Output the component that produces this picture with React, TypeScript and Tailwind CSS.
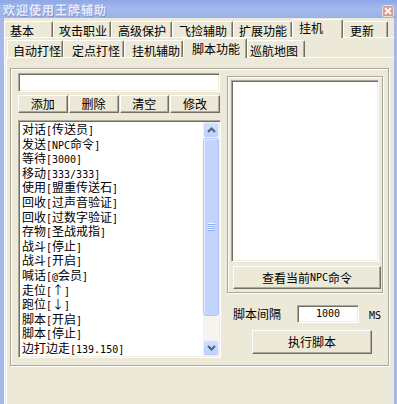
import React from 'react';

type TabDef = { label: string; cls: string; active?: boolean };

const topTabs: TabDef[] = [
  { label: '基本', cls: 'w-[49px] pl-[5px]' },
  { label: '攻击职业', cls: 'w-[58px] pl-[5px]' },
  { label: '高级保护', cls: 'w-[61px] pl-[6px]' },
  { label: '飞捡辅助', cls: 'w-[61px] pl-[6px]' },
  { label: '扩展功能', cls: 'w-[59px] pl-[5px]' },
  { label: '挂机', cls: 'w-[51px] pl-[6px]', active: true },
  { label: '更新', cls: 'w-[45px] pl-[6px]' },
];

const subTabs: TabDef[] = [
  { label: '自动打怪', cls: 'w-[56px] pl-[5px]' },
  { label: '定点打怪', cls: 'w-[61px] pl-[8px]' },
  { label: '挂机辅助', cls: 'w-[59px] pl-[7px]' },
  { label: '脚本功能', cls: 'w-[64px] pl-[8px]', active: true },
  { label: '巡航地图', cls: 'w-[58px] pl-[2px]' },
];

const commands = [
  '对话[传送员]',
  '发送[NPC命令]',
  '等待[3000]',
  '移动[333/333]',
  '使用[盟重传送石]',
  '回收[过声音验证]',
  '回收[过数字验证]',
  '存物[圣战戒指]',
  '战斗[停止]',
  '战斗[开启]',
  '喊话[@会员]',
  '走位[↑]',
  '跑位[↓]',
  '脚本[开启]',
  '脚本[停止]',
  '边打边走[139.150]',
];

// half-width ascii runs get a 6px-wide mono face, like the old bitmap font
function Txt({ s }: { s: string }) {
  return (
    <>
      {s.split(/([\x21-\x7e]+)/).map((p, i) =>
        /^[\x21-\x7e]+$/.test(p) ? (
          <span key={i} className="font-['DejaVu_Sans_Mono',monospace] text-[10px] leading-[10px]">
            {p}
          </span>
        ) : (
          p
        ),
      )}
    </>
  );
}

function Tab({ t, row }: { t: TabDef; row: 1 | 2 }) {
  const base =
    'flex items-center shrink-0 bg-[#ece9d8] border-t border-l border-white border-r border-r-[#716f64] shadow-[inset_-1px_0_0_#aca899] rounded-t-[2px]';
  let size = '';
  if (t.active) size = row === 1 ? 'h-[19px] pb-[3px] -mb-[1px]' : 'h-[20px] -mb-[1px]';
  else size = row === 1 ? 'h-[16px] pt-[2px]' : 'h-[17px] pt-[3px]';
  return <div className={`${base} ${size} ${t.cls}`}>{t.label}</div>;
}

function Button({ children, className }: { children: React.ReactNode; className?: string }) {
  return (
    <div
      className={`flex items-center justify-center bg-[#ece9d8] border border-t-white border-l-white border-r-[#716f64] border-b-[#716f64] shadow-[inset_-1px_-1px_0_#aca899] ${className ?? ''}`}
    >
      {children}
    </div>
  );
}

const sunken =
  'bg-white border border-t-[#aca899] border-l-[#aca899] border-r-white border-b-white shadow-[inset_1px_1px_0_#716f64,inset_-1px_-1px_0_#f1efe2]';

const etched = 'border border-[#aca899] shadow-[inset_1px_1px_0_#fff,1px_1px_0_#fff]';

function ScrollArrow({ down }: { down?: boolean }) {
  return (
    <div className="h-[16px] w-[16px] rounded-[3px] border border-[#e6edfd] bg-linear-to-b from-[#d4e0fd] to-[#bccefb] flex items-center justify-center">
      <svg width="9" height="6" viewBox="0 0 9 6">
        <polyline
          points={down ? '1,1 4.5,4.5 8,1' : '1,5 4.5,1.5 8,5'}
          fill="none"
          stroke="#4d6185"
          strokeWidth="2"
        />
      </svg>
    </div>
  );
}

function ScrollBar() {
  return (
    <div className="w-[16px] h-full shrink-0 flex flex-col bg-[#f5f4ef]">
      <ScrollArrow />
      <div className="h-[178px] rounded-[3px] border border-[#b3c8f7] bg-[#c3d4fc] shadow-[inset_1px_1px_0_#e4ecfe] flex flex-col items-center justify-center gap-[1px]">
        {[0, 1, 2, 3].map((i) => (
          <div key={i} className="w-[7px] h-[1px] bg-[#8eaaf0] shadow-[0_-1px_0_#eef3fe]" />
        ))}
      </div>
      <div className="flex-1" />
      <ScrollArrow down />
    </div>
  );
}

export default function App() {
  return (
    <div className="w-[397px] h-[404px] overflow-hidden flex flex-col bg-[#ece9d8] text-black text-[12px] leading-[12px] font-['Noto_Sans_CJK_SC',sans-serif]">
      {/* title bar */}
      <div className="h-[18px] shrink-0 flex items-center justify-between pl-[3px] pr-[3px] bg-linear-to-b from-[#8ea7e6] via-[#a3b9ee] to-[#9ab1ea]">
        <span className="pt-[2px] font-bold tracking-[1px] text-[#e4eaf9] [text-shadow:1px_1px_0_#7f96d3]">
          欢迎使用王牌辅助
        </span>
        <div className="self-end mb-[1px] w-[12px] h-[12px] rounded-[2px] border border-[#f2dcd8] bg-[#d99a91] flex items-center justify-center">
          <svg width="8" height="8" viewBox="0 0 8 8">
            <path d="M1 1 L7 7 M7 1 L1 7" stroke="#fff" strokeWidth="1.8" />
          </svg>
        </div>
      </div>

      <div className="flex-1 flex flex-col border-l-4 border-r-[3px] border-[#a5b7eb]">
        <div className="h-[19px] shrink-0 flex items-end relative z-10">
          {topTabs.map((t) => (
            <Tab key={t.label} t={t} row={1} />
          ))}
        </div>

        <div className="flex-1 flex flex-col border-t border-l border-white pl-[1px]">
          <div className="h-[19px] shrink-0 flex items-end pl-[1px] relative z-10">
            {subTabs.map((t) => (
              <Tab key={t.label} t={t} row={2} />
            ))}
          </div>

          <div className="flex-1 border-t border-l border-white pl-[3px] pt-[10px]">
            <div className={`w-[379px] h-[298px] flex pl-[7px] pt-[4px] gap-[6px] ${etched}`}>
              {/* left: command editor + list */}
              <div className="w-[203px] flex flex-col">
                <div className={`h-[19px] w-[202px] ${sunken}`} />
                <div className="mt-[3px] h-[18px] w-[202px] grid grid-cols-4 gap-[1px]">
                  <Button>添加</Button>
                  <Button>删除</Button>
                  <Button>清空</Button>
                  <Button>修改</Button>
                </div>
                <div className={`mt-[7px] h-[238px] p-[1px] flex ${sunken}`}>
                  <div className="flex-1 overflow-hidden pl-[2px]">
                    {commands.map((c, i) => (
                      <div key={i} className="h-[14.6px] leading-[14.6px] whitespace-nowrap">
                        <Txt s={c} />
                      </div>
                    ))}
                  </div>
                  <ScrollBar />
                </div>
              </div>

              {/* right: npc viewer + run controls */}
              <div className="flex flex-col">
                <div className={`mt-[3px] w-[156px] h-[217px] pl-[3px] pt-[3px] ${etched}`}>
                  <div className={`w-[148px] h-[182px] ${sunken}`} />
                  <Button className="mt-[4px] ml-[2px] w-[148px] h-[23px]">
                    <Txt s="查看当前NPC命令" />
                  </Button>
                </div>
                <div className="mt-[12px] h-[18px] flex items-center pl-[6px]">
                  <span className="w-[48px]">脚本间隔</span>
                  <div className={`ml-[16px] w-[62px] h-[18px] flex items-center justify-center ${sunken}`}>
                    <Txt s="1000" />
                  </div>
                  <span className="ml-[10px]">
                    <Txt s="MS" />
                  </span>
                </div>
                <Button className="mt-[7px] ml-[25px] w-[120px] h-[24px]">执行脚本</Button>
              </div>
            </div>
          </div>
        </div>
      </div>
    </div>
  );
}
